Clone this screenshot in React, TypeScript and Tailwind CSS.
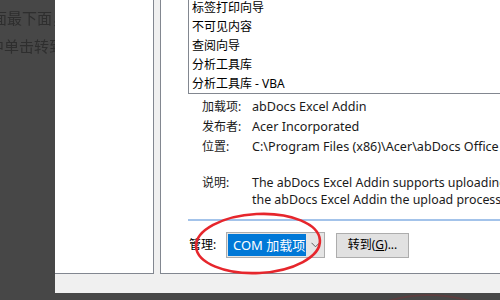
const items = ["标签打印向导", "不可见内容", "查阅向导", "分析工具库", "分析工具库 - VBA"];

const details = [
  { label: "加载项:", value: "abDocs Excel Addin" },
  { label: "发布者:", value: "Acer Incorporated" },
  { label: "位置:", value: "C:\\Program Files (x86)\\Acer\\abDocs Office Addins\\abDocs.ExcelAddin.vsto" },
];

export default function App() {
  return (
    <div className="relative w-[500px] h-[300px] overflow-hidden bg-[#474747] flex font-['Noto_Sans','Noto_Sans_CJK_SC',sans-serif] text-[12px] text-black">
      {/* dimmed article text behind the dialog */}
      <div className="w-[55px] shrink-0 overflow-hidden text-[15px] text-[#2e2e2e] font-['Noto_Sans_CJK_SC',sans-serif] blur-[0.4px]">
        <div className="whitespace-nowrap ml-[-8px] mt-[7px] leading-[22px]">面最下面，</div>
        <div className="whitespace-nowrap ml-[-11px] mt-[6px] leading-[22px]">中单击转到</div>
      </div>

      <div className="flex-1 flex flex-col">
        <div className="h-[293px] bg-[#f0f0f0] flex flex-col">
          <div className="flex h-[274px] gap-[6px]">
            <div className="w-[99px] shrink-0 bg-white border-r border-b border-[#828790]" />
            <div className="flex-1 min-w-0 bg-white border-l border-b border-[#828790] overflow-hidden flex flex-col">
              {/* add-in list */}
              <div className="mt-[-2px] ml-[27px] border-l border-b border-[#828790]">
                {items.map((it) => (
                  <div key={it} className="h-[19px] leading-[19px] pl-[3px] whitespace-nowrap">
                    {it}
                  </div>
                ))}
              </div>

              {/* details */}
              <div className="mt-[3px] pl-[41px]">
                {details.map((d) => (
                  <div key={d.label} className="flex h-[20px] leading-[20px] whitespace-nowrap text-[#1a1a1a]">
                    <span className="w-[50px] shrink-0">{d.label}</span>
                    <span className="text-[12.6px]">{d.value}</span>
                  </div>
                ))}
                <div className="flex mt-[17px] whitespace-nowrap text-[#1a1a1a]">
                  <span className="w-[50px] shrink-0 leading-[17px]">说明:</span>
                  <div className="leading-[17px] text-[12.4px]">
                    <div>The abDocs Excel Addin supports uploading documents to abDocs.</div>
                    <div>the abDocs Excel Addin the upload process is easier.</div>
                  </div>
                </div>
              </div>

              <div className="mt-[11px] ml-[27px] h-[2px] bg-[#a3c3ea]" />

              {/* manage row */}
              <div className="mt-[11px] ml-[28px] flex items-center">
                <span className="w-[37px] shrink-0 whitespace-nowrap">管理:</span>
                <div className="w-[99px] h-[26px] border border-[#adadad] bg-[#e5e5e5] flex">
                  <div className="m-[1px] w-[78px] bg-[#0078d7] text-white text-[13px] leading-[22px] pl-[5px] whitespace-nowrap">
                    COM 加载项
                  </div>
                  <div className="flex-1 flex items-center justify-center">
                    <svg width="9" height="6" viewBox="0 0 9 6">
                      <path d="M0.5 0.8 L4.5 4.8 L8.5 0.8" fill="none" stroke="#606060" strokeWidth="1" />
                    </svg>
                  </div>
                </div>
                <button className="ml-[11px] w-[73px] h-[25px] bg-[#e1e1e1] border border-[#adadad] text-[12px] whitespace-nowrap">
                  转到(<span className="underline">G</span>)...
                </button>
              </div>
            </div>
          </div>
        </div>
      </div>

      {/* red annotation circles */}
      <svg className="absolute inset-0 pointer-events-none" width="500" height="300" viewBox="0 0 500 300">
        <ellipse cx="258" cy="243.5" rx="62" ry="29.5" transform="rotate(-3 258 243.5)" fill="none" stroke="#e6262c" strokeWidth="2.6" />
        <path d="M388 301 Q428 289 470 301" fill="none" stroke="#5c3e3f" strokeWidth="2" />
      </svg>
    </div>
  );
}
